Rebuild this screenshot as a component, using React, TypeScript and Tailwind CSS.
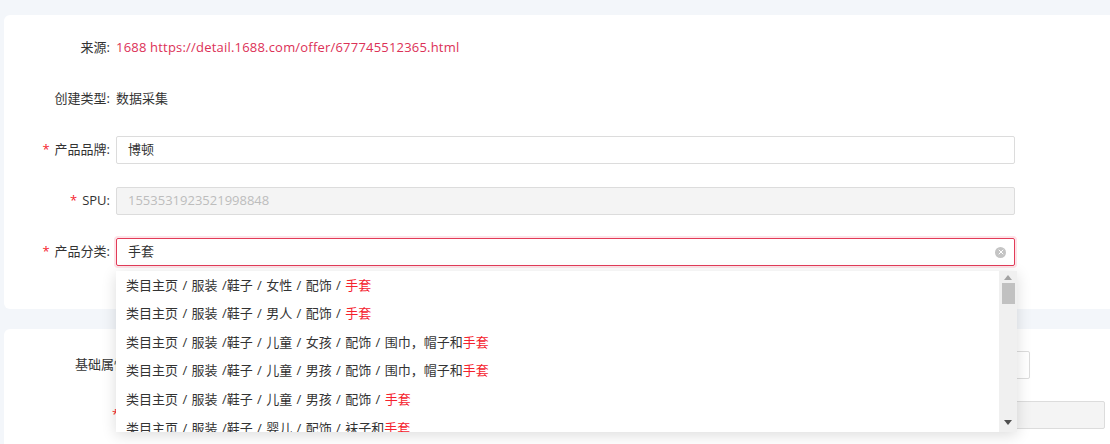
import { X } from "lucide-react"

const font = { fontFamily: '"Open Sans", "Noto Sans CJK SC", sans-serif' }

const options = [
  ["类目主页 / 服装 /鞋子 / 女性 / 配饰 / ", "手套"],
  ["类目主页 / 服装 /鞋子 / 男人 / 配饰 / ", "手套"],
  ["类目主页 / 服装 /鞋子 / 儿童 / 女孩 / 配饰 / 围巾，帽子和", "手套"],
  ["类目主页 / 服装 /鞋子 / 儿童 / 男孩 / 配饰 / 围巾，帽子和", "手套"],
  ["类目主页 / 服装 /鞋子 / 儿童 / 男孩 / 配饰 / ", "手套"],
  ["类目主页 / 服装 /鞋子 / 婴儿 / 配饰 / 袜子和", "手套"],
]

function Label({ text, required }: { text: string; required?: boolean }) {
  return (
    <div className="w-[112px] shrink-0 text-right text-[13px] text-[#333] pr-[6px]">
      {required && <span className="text-[#f5222d] mr-[5px]">*</span>}
      {text}:
    </div>
  )
}

export default function App() {
  return (
    <div className="w-[1110px] h-[444px] overflow-hidden bg-[#f3f6fa] relative" style={font}>
      <div className="pt-[15px] pl-[4px]">
        <div className="w-[1130px] bg-white rounded-[6px] pt-[19px] pb-[43px]">
          <div className="flex items-center h-[28px] mb-[23px]">
            <Label text="来源" />
            <span className="text-[13px] text-[#dc3157] tracking-[0.2px]">1688 https://detail.1688.com/offer/677745512365.html</span>
          </div>
          <div className="flex items-center h-[28px] mb-[23px]">
            <Label text="创建类型" />
            <span className="text-[13px] text-[#333]">数据采集</span>
          </div>
          <div className="flex items-center h-[28px] mb-[23px]">
            <Label text="产品品牌" required />
            <div className="w-[899px] h-[28px] border border-[#dcdcdc] rounded-[2px] flex items-center px-[11px] text-[13px] text-[#333]">
              博顿
            </div>
          </div>
          <div className="flex items-center h-[28px] mb-[23px]">
            <Label text="SPU" required />
            <div className="w-[899px] h-[28px] border border-[#dcdcdc] bg-[#f4f4f4] rounded-[2px] flex items-center px-[11px] text-[13px] text-[#bdbdbd]">
              1553531923521998848
            </div>
          </div>
          <div className="flex items-center h-[28px]">
            <Label text="产品分类" required />
            <div className="w-[899px] h-[28px] border border-[#e23b58] ring-2 ring-[#fde3e8] rounded-[2px] flex items-center justify-between pl-[11px] pr-[8px] text-[13px] text-[#333]">
              手套
              <span className="w-[11px] h-[11px] rounded-full bg-[#c4c4c4] flex items-center justify-center">
                <X size={8} strokeWidth={3} color="#fff" />
              </span>
            </div>
          </div>
        </div>
        <div className="w-[1130px] bg-white rounded-[6px] mt-[20px] h-[200px] pt-[22px]">
          <div className="flex items-center h-[28px] mb-[22px]">
            <span className="w-[150px] shrink-0 pl-[71px] text-[13px] text-[#333]">基础属性:</span>
            <div className="w-[876px] h-[28px] border border-[#dcdcdc] rounded-[2px]" />
          </div>
          <div className="flex items-center h-[28px]">
            <span className="w-[150px] shrink-0 pl-[108px] text-[13px] text-[#f5222d]">*</span>
            <div className="w-[951px] h-[28px] border border-[#dcdcdc] bg-[#f4f4f4] rounded-[2px]" />
          </div>
        </div>
      </div>

      <div className="absolute left-[116px] top-[271px] w-[901px] h-[161px] bg-white shadow-[0_3px_14px_rgba(0,0,0,0.14)] flex overflow-hidden">
        <div className="flex-1">
          {options.map(([path, hit], i) => (
            <div key={i} className="h-[28.6px] flex items-center pl-[10px] text-[13px] text-[#333] whitespace-pre [word-spacing:1px]">
              <span>{path}</span>
              <span className="text-[#f5222d]">{hit}</span>
            </div>
          ))}
        </div>
        <div className="w-[18px] bg-[#f0f0f0] flex flex-col items-center">
          <svg width="8" height="5" viewBox="0 0 8 5" className="mt-[4px]">
            <path d="M0 5 L4 0 L8 5 Z" fill="#a3a3a3" />
          </svg>
          <div className="w-[13px] h-[21px] bg-[#c1c1c1] mt-[3px]" />
          <div className="flex-1" />
          <svg width="8" height="5" viewBox="0 0 8 5" className="mb-[7px]">
            <path d="M0 0 L8 0 L4 5 Z" fill="#505050" />
          </svg>
        </div>
      </div>
    </div>
  )
}
